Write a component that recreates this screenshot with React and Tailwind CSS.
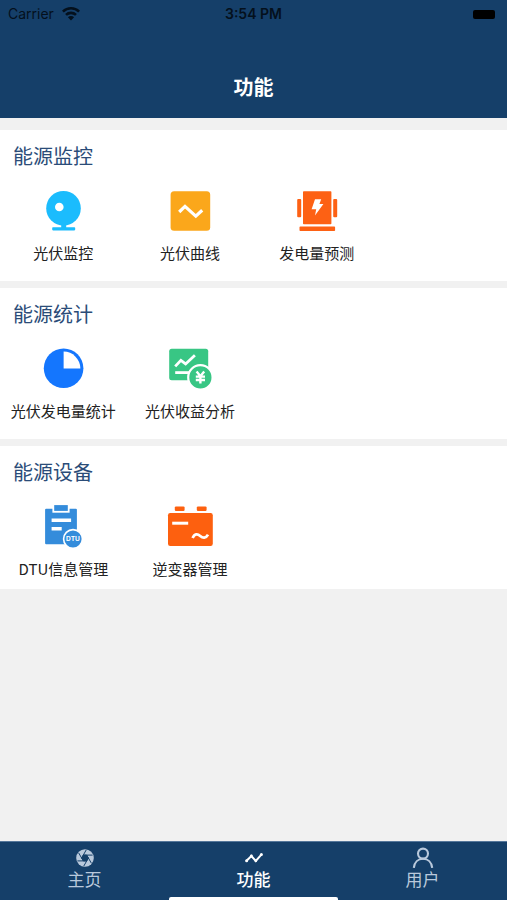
import React from 'react';

function MonitorIcon() {
  return (
    <svg viewBox="0 0 44 44" className="size-11" aria-hidden="true">
      <g fill="#1bbcfd">
        <circle cx="22.5" cy="19.3" r="17.3" />
        <path d="M20.2 35h5v4h-5z" />
        <rect x="11.2" y="38.2" width="23" height="3.2" rx="0.8" />
      </g>
      <circle cx="18.3" cy="18" r="4.3" fill="#fff" />
    </svg>
  );
}

function CurveIcon() {
  return (
    <svg viewBox="0 0 44 44" className="size-11" aria-hidden="true">
      <rect x="2.6" y="2.2" width="39.6" height="39.6" rx="3.5" fill="#fba71b" />
      <path d="M11.2 23 17 17.4 27.8 27.2 34.2 21.3" fill="none" stroke="#fff" strokeWidth="3.2" />
    </svg>
  );
}

function ForecastIcon() {
  return (
    <svg viewBox="0 0 44 44" className="size-11" aria-hidden="true">
      <g fill="#fd6114">
        <rect x="8" y="2.2" width="28.4" height="33" rx="0.8" />
        <rect x="4.5" y="37.6" width="35.6" height="4.4" rx="0.8" />
        <rect x="2.2" y="10" width="4" height="18.3" rx="1" />
        <rect x="38.2" y="10" width="4" height="18.3" rx="1" />
      </g>
      <path d="M20 10.3h6.2L24.4 15h4L20 26.6l1.2-6.4h-4.6z" fill="#fff" />
    </svg>
  );
}

function StatsIcon() {
  return (
    <svg viewBox="0 0 44 44" className="size-11" aria-hidden="true">
      <circle cx="22.6" cy="21.3" r="19.8" fill="#1476fe" />
      <path d="M22.6 21.6V4.6A17 17 0 0 1 39.4 21.6z" fill="#fff" />
    </svg>
  );
}

function YieldIcon() {
  return (
    <svg viewBox="0 0 44 44" className="size-11" aria-hidden="true">
      <rect x="1.2" y="1.8" width="39" height="31.4" rx="2.5" fill="#38c684" />
      <path d="M7.2 19.4 12.9 13.4 17.6 16.9 26.9 8.2" fill="none" stroke="#fff" strokeWidth="2.8" />
      <path d="M7.2 25.6H24" stroke="#fff" strokeWidth="2.8" />
      <circle cx="32.4" cy="30.4" r="12.2" fill="#38c684" stroke="#fff" strokeWidth="2.2" />
      <path
        d="M28.6 24.6 32.4 29.2 36.2 24.6M32.4 29.2V36.6M27.8 29.6H37M27.8 33H37"
        fill="none"
        stroke="#fff"
        strokeWidth="2.4"
      />
    </svg>
  );
}

function DtuIcon() {
  return (
    <svg viewBox="0 0 44 44" className="size-11" aria-hidden="true">
      <rect x="4.1" y="3.8" width="31.8" height="35.4" rx="1" fill="#348cdb" />
      <rect x="12.3" y="-0.8" width="15.4" height="7.6" fill="#348cdb" stroke="#fff" strokeWidth="1.8" />
      <path d="M10.6 15.2H30.1M10.6 23.8H20.7" stroke="#fff" strokeWidth="3.6" />
      <circle cx="32" cy="34" r="9.4" fill="#348cdb" stroke="#fff" strokeWidth="1.6" />
      <text
        x="32"
        y="36.4"
        textAnchor="middle"
        fontSize="6.6"
        fontWeight="700"
        fill="#fff"
        fontFamily="Inter, sans-serif"
      >
        DTU
      </text>
    </svg>
  );
}

function InverterIcon() {
  return (
    <svg viewBox="0 0 44 44" className="size-11 overflow-visible" aria-hidden="true">
      <g fill="#fd600f">
        <rect x="0" y="8" width="44.8" height="33" rx="2.2" />
        <rect x="6.8" y="1.4" width="9.8" height="4.6" rx="1.2" />
        <rect x="28.8" y="1.4" width="9.8" height="4.6" rx="1.2" />
      </g>
      <path d="M4.2 18.2H20.2" stroke="#fff" strokeWidth="3" />
      <path
        d="M24.6 33C26.7 28.6 29.5 28.6 32.2 31S37.8 33.6 40 29.6"
        fill="none"
        stroke="#fff"
        strokeWidth="2.8"
      />
    </svg>
  );
}

function ApertureIcon() {
  return (
    <svg viewBox="0 0 20 20" className="size-5" aria-hidden="true">
      <circle cx="10" cy="10" r="8.8" fill="currentColor" />
      <g stroke="#153f69" strokeWidth="1" fill="none">
        <path d="M13.4 10 11.7 12.9H8.3L6.6 10 8.3 7.1H11.7z" fill="#153f69" />
        <path d="M8.3 7.1H17.6M11.7 7.1 16.4 15.2M13.4 10 8.8 18M11.7 12.9H2.4M8.3 12.9 3.6 4.8M6.6 10 11.2 2" />
      </g>
    </svg>
  );
}

function TrendIcon() {
  return (
    <svg viewBox="0 0 20 20" className="size-5" fill="currentColor" aria-hidden="true">
      <path d="M2.6 12.8 7.4 8 11.8 13 17.4 6.6" fill="none" stroke="currentColor" strokeWidth="2" />
      <circle cx="2.6" cy="12.8" r="1.5" />
      <circle cx="7.4" cy="8" r="1.4" />
      <circle cx="11.8" cy="12.8" r="1.4" />
      <circle cx="17.4" cy="6.6" r="1.5" />
    </svg>
  );
}

function UserIcon() {
  return (
    <svg viewBox="0 0 22 22" className="size-[22px]" fill="none" stroke="currentColor" strokeWidth="2.1" aria-hidden="true">
      <circle cx="11" cy="6.6" r="5" />
      <path d="M1.8 20.8C2.4 15.2 6.2 11.8 11 11.8S19.6 15.2 20.2 20.8" />
    </svg>
  );
}

function WifiIcon() {
  return (
    <svg viewBox="0 0 18 14" className="h-3.5 w-[18px]" aria-label="Wi-Fi">
      <g fill="none" stroke="currentColor" strokeWidth="2.6">
        <path d="M0.9 4.6A11.6 11.6 0 0 1 17.1 4.6" />
        <path d="M4 7.9A7.2 7.2 0 0 1 14 7.9" />
      </g>
      <path d="M9 13.4 5.9 10.2A4.4 4.4 0 0 1 12.1 10.2z" fill="currentColor" />
    </svg>
  );
}

const sections = [
  {
    title: '能源监控',
    items: [
      { label: '光伏监控', Icon: MonitorIcon },
      { label: '光伏曲线', Icon: CurveIcon },
      { label: '发电量预测', Icon: ForecastIcon },
    ],
  },
  {
    title: '能源统计',
    items: [
      { label: '光伏发电量统计', Icon: StatsIcon },
      { label: '光伏收益分析', Icon: YieldIcon },
    ],
  },
  {
    title: '能源设备',
    items: [
      { label: 'DTU信息管理', Icon: DtuIcon },
      { label: '逆变器管理', Icon: InverterIcon },
    ],
  },
];

function StatusBar() {
  return (
    <div className="grid grid-cols-3 items-center h-7 px-2 text-sm text-[#04101c] font-[Inter,sans-serif]">
      <div className="flex items-center gap-2">
        <span>Carrier</span>
        <WifiIcon />
      </div>
      <span className="text-center font-semibold">3:54 PM</span>
      <span className="justify-self-end mr-1 h-[9px] w-[22px] rounded-xs bg-black" />
    </div>
  );
}

function Section({ title, items }) {
  return (
    <section className="bg-white pt-[11px] pb-[18px] last:pb-2.5">
      <h2 className="px-[13px] text-xl leading-[30px] text-[#2b4c78]">{title}</h2>
      <div className="mt-[18px] grid grid-cols-4">
        {items.map(({ label, Icon }) => (
          <button key={label} type="button" className="flex flex-col items-center gap-2.5">
            <Icon />
            <span className="text-[15px] leading-5 whitespace-nowrap text-[#222]">{label}</span>
          </button>
        ))}
      </div>
    </section>
  );
}

function TabBar() {
  const tabs = [
    { label: '主页', icon: <ApertureIcon /> },
    { label: '功能', icon: <TrendIcon />, active: true },
    { label: '用户', icon: <UserIcon /> },
  ];

  return (
    <footer className="border-t border-[#55779b] bg-[#153f69]">
      <nav className="grid grid-cols-3 pt-[5px]">
        {tabs.map((tab) => (
          <a
            key={tab.label}
            href="#"
            className={`flex flex-col items-center ${tab.active ? 'text-white' : 'text-[#b9c9dc]'}`}
          >
            <span className="flex h-[22px] items-center">{tab.icon}</span>
            <span className={`text-[17px] leading-5 ${tab.active ? 'font-medium' : ''}`}>{tab.label}</span>
          </a>
        ))}
      </nav>
      <div className="mx-auto mt-2 h-[3px] w-1/3 rounded-t-xs bg-white" />
    </footer>
  );
}

function App() {
  return (
    <div className="flex min-h-screen flex-col bg-[#f1f1f1] font-['Noto_Sans_CJK_SC',sans-serif]">
      <header className="bg-[#153f69] pb-4">
        <StatusBar />
        <h1 className="pt-11 text-center text-xl leading-[30px] font-bold text-white">功能</h1>
      </header>
      <main className="flex-1 pt-3">
        <div className="flex flex-col gap-[7px]">
          {sections.map((section) => (
            <Section key={section.title} title={section.title} items={section.items} />
          ))}
        </div>
      </main>
      <TabBar />
    </div>
  );
}

export default App;
